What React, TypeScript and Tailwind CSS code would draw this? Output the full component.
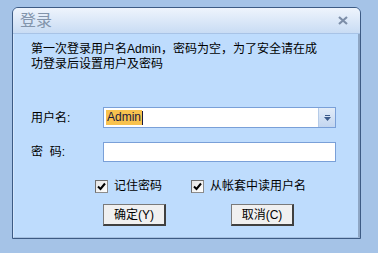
import React from 'react'

const font = { fontFamily: '"Liberation Sans", "Noto Sans CJK SC", sans-serif' }

function Check({ label }: { label: string }) {
  return (
    <label className="flex items-center gap-[6px] text-[12px] leading-[14px] text-black">
      <span className="w-[13px] h-[13px] bg-gradient-to-br from-[#e4e4e4] to-white border border-[#8c8c8c] border-t-[#6e6e6e] border-l-[#6e6e6e] flex items-center justify-center">
        <svg width="9" height="9" viewBox="0 0 9 9">
          <path d="M1 4.5 L3.5 7 L8 1.5" stroke="#000" strokeWidth="2" fill="none" />
        </svg>
      </span>
      {label}
    </label>
  )
}

function Btn({ children }: { children: React.ReactNode }) {
  return (
    <button className="w-[63px] h-[22px] bg-[#f0f0f0] border border-[#7a7a7a] border-r-2 border-b-2 border-r-[#404040] border-b-[#404040] text-[12px] leading-[14px] text-black flex items-center justify-center">
      {children}
    </button>
  )
}

export default function App() {
  return (
    <div className="w-[378px] h-[253px] bg-[#a5c3e7] pt-[7px] pl-[12px]" style={font}>
      <div className="w-[349px] h-[232px] border border-[#3d5b84] rounded-t-[6px] overflow-hidden flex flex-col">
        {/* Title bar */}
        <div className="h-[26px] bg-gradient-to-b from-[#eef4fc] to-[#c9dcf4] border-b border-[#a8c3e6] flex items-center pl-[7px] pr-[12px]">
          <span className="text-[16px] leading-[18px] text-[#8294ab] flex-1">登录</span>
          <svg width="10" height="9" viewBox="0 0 10 9">
            <path d="M1 1 L9 8 M9 1 L1 8" stroke="#7d8ea8" strokeWidth="2.2" />
          </svg>
        </div>

        {/* Body */}
        <div className="flex-1 bg-[#bedcfd] border-l border-[#d3e6fd] border-r-2 border-r-[#8ea6c4] border-b border-b-[#a6c0e0] pl-[17px] pt-[8px]">
          <p className="text-[12px] leading-[15px] text-black w-[310px]">
            第一次登录用户名Admin，密码为空，为了安全请在成<br />功登录后设置用户及密码
          </p>

          <div className="mt-[35px] flex items-center">
            <span className="w-[72px] text-[12px] leading-[14px] text-black">用户名:</span>
            <div className="w-[233px] h-[21px] bg-white border border-[#7aa0d8] flex items-center">
              <div className="flex-1 flex items-center pl-[2px]">
                <span className="bg-[#f8c24e] text-[#1a1a40] text-[12px] leading-[15px] px-[1px]">Admin</span>
                <span className="w-[1px] h-[14px] bg-[#1a1a40]" />
              </div>
              <div className="w-[17px] h-full bg-gradient-to-b from-[#e2ecf8] to-[#c3d6f0] border-l border-[#b5cbe8] flex flex-col items-center justify-center gap-[1px]">
                <span className="w-[5px] h-[1px] bg-[#3d5b8a]" />
                <svg width="7" height="4" viewBox="0 0 7 4">
                  <path d="M0 0 L7 0 L3.5 4 Z" fill="#3d5b8a" />
                </svg>
              </div>
            </div>
          </div>

          <div className="mt-[14px] flex items-center">
            <span className="w-[72px] text-[12px] leading-[14px] text-black">密&nbsp;&nbsp;码:</span>
            <div className="w-[233px] h-[20px] bg-white border border-[#7aa0d8]" />
          </div>

          <div className="mt-[17px] flex items-center pl-[64px] gap-[29px]">
            <Check label="记住密码" />
            <Check label="从帐套中读用户名" />
          </div>

          <div className="mt-[11px] flex pl-[72px] gap-[65px]">
            <Btn>确定(Y)</Btn>
            <Btn>取消(C)</Btn>
          </div>
        </div>
      </div>
    </div>
  )
}
